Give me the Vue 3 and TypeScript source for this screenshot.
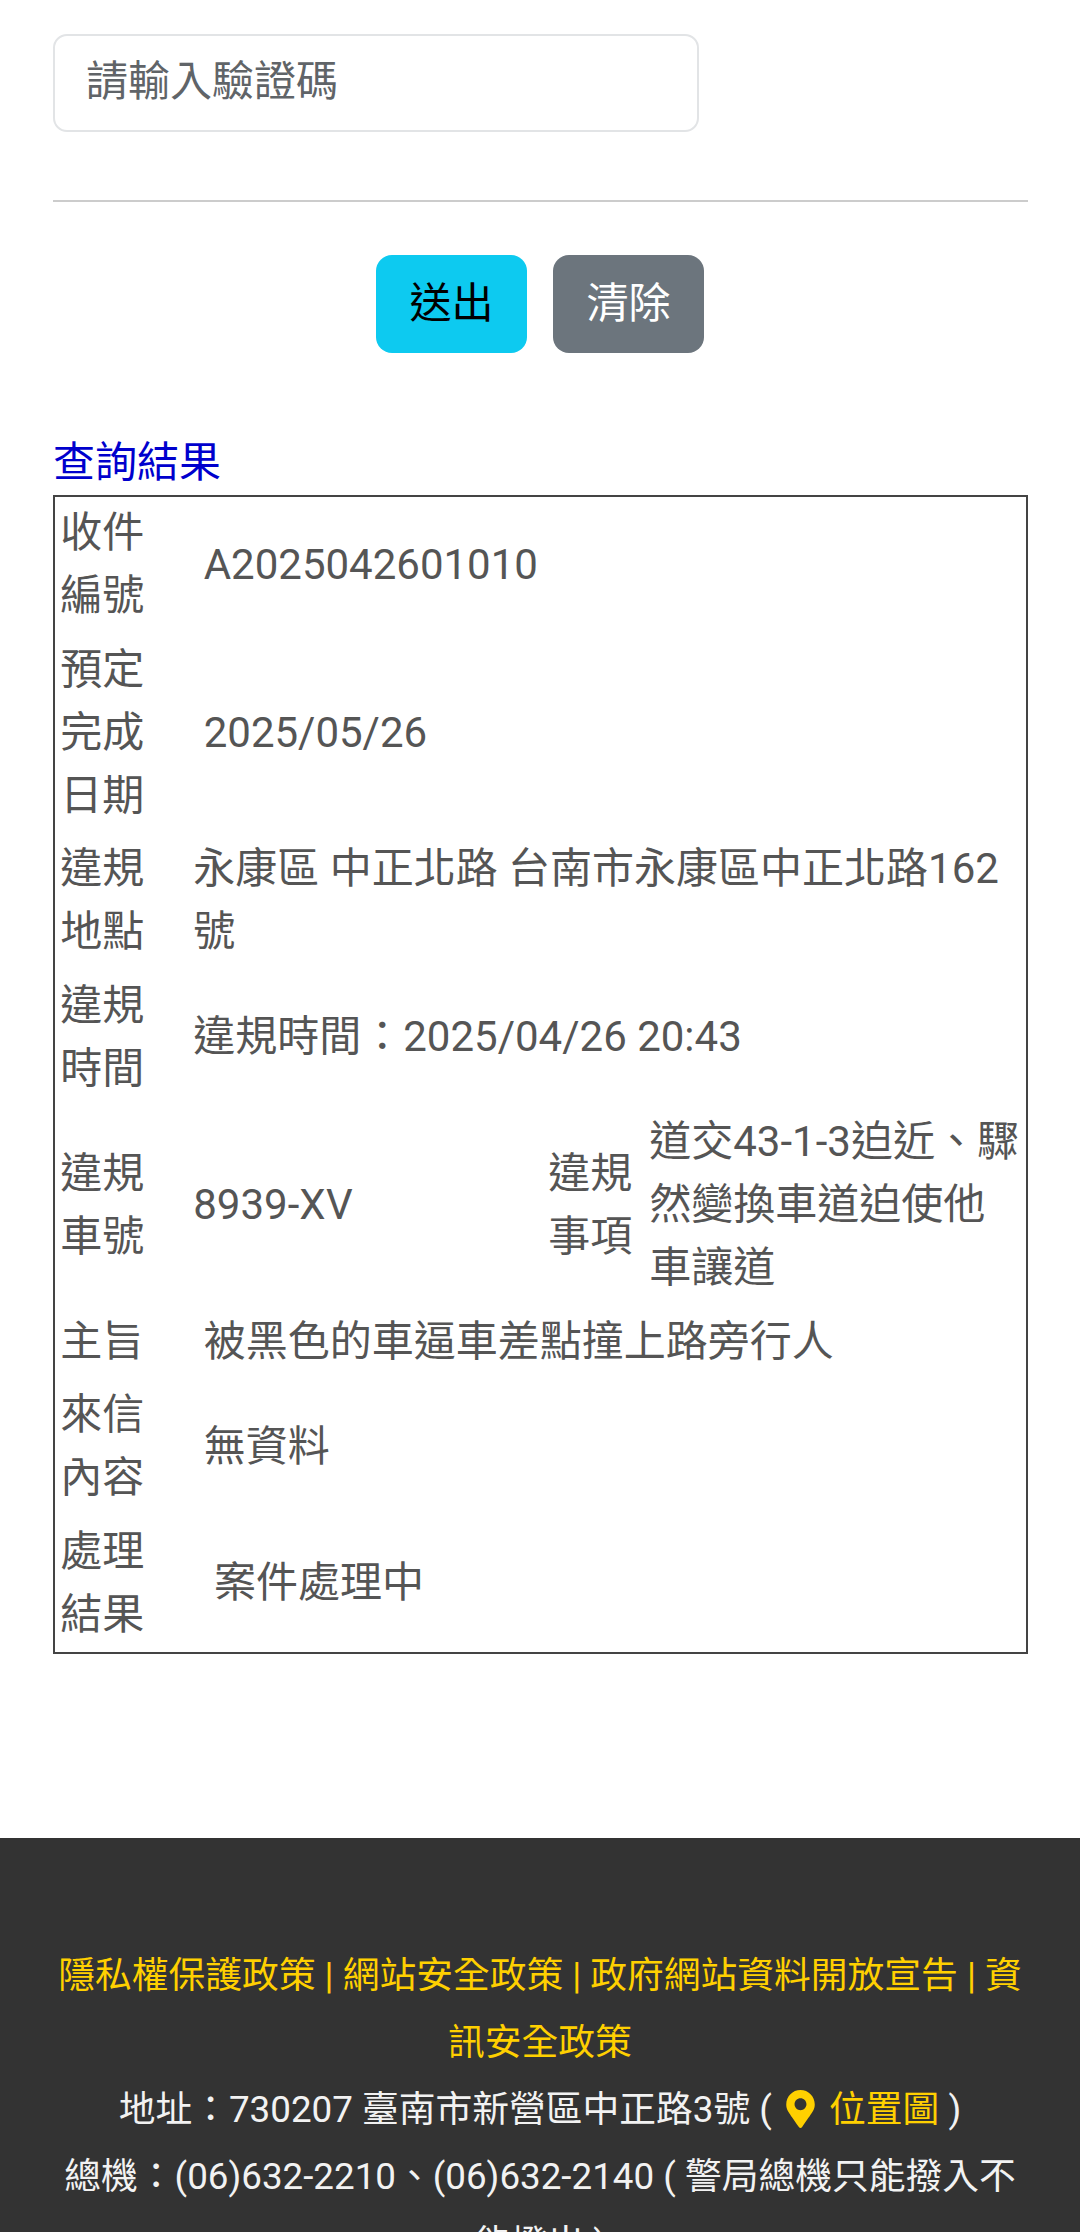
<script setup lang="ts">
interface Row {
  label: string
  value: string
}
const before: Row[] = [
  { label: '收件編號', value: '\u00a0A2025042601010' },
  { label: '預定完成日期', value: '\u00a02025/05/26' },
  { label: '違規地點', value: '永康區 中正北路 台南市永康區中正北路162號' },
  { label: '違規時間', value: '違規時間：2025/04/26 20:43' },
]
const after: Row[] = [
  { label: '主旨', value: '\u00a0被黑色的車逼車差點撞上路旁行人' },
  { label: '來信內容', value: '\u00a0無資料' },
  { label: '處理結果', value: '\u00a0\u00a0案件處理中' },
]
const links = ['隱私權保護政策', '網站安全政策', '政府網站資料開放宣告', '資訊安全政策']
const pinPath =
  'M172.268 501.67C26.97 291.031 0 269.413 0 192 0 85.961 85.961 0 192 0s192 85.961 192 192c0 77.413-26.97 99.031-172.268 309.67-9.535 13.774-29.93 13.773-39.464 0zM192 272c44.183 0 80-35.817 80-80s-35.817-80-80-80-80 35.817-80 80 35.817 80 80 80z'
</script>

<template>
  <div class="page">
    <main class="content">
      <input class="captcha" type="text" placeholder="請輸入驗證碼" />
      <hr class="rule" />
      <div class="actions">
        <button class="btn btn-send" type="button">送出</button>
        <button class="btn btn-clear" type="button">清除</button>
      </div>
      <div class="result-title">查詢結果</div>
      <table class="result">
        <colgroup>
          <col class="c1" />
          <col class="c2" />
          <col class="c3" />
          <col class="c4" />
        </colgroup>
        <tbody>
          <tr v-for="r in before" :key="r.label">
            <td>{{ r.label }}</td>
            <td colspan="3">{{ r.value }}</td>
          </tr>
          <tr>
            <td>違規車號</td>
            <td>8939-XV</td>
            <td>違規事項</td>
            <td>道交43-1-3迫近、驟然變換車道迫使他車讓道</td>
          </tr>
          <tr v-for="r in after" :key="r.label">
            <td>{{ r.label }}</td>
            <td colspan="3">{{ r.value }}</td>
          </tr>
        </tbody>
      </table>
    </main>
    <footer class="footer">
      <p class="links">
        <template v-for="(l, i) in links" :key="l">
          <span v-if="i > 0"> | </span><a href="#" @click.prevent>{{ l }}</a>
        </template>
      </p>
      <p class="info">地址：730207 臺南市新營區中正路3號 ( <svg class="pin" viewBox="0 0 384 512" aria-hidden="true"><path fill="#ffd000" :d="pinPath" /></svg> <a href="#" @click.prevent>位置圖</a> )</p>
      <p class="info">總機：(06)632-2210、(06)632-2140 ( 警局總機只能撥入不能撥出 )</p>
    </footer>
  </div>
</template>

<style>
html,
body {
  margin: 0;
  background: #fff;
}
</style>

<style scoped>
.page {
  height: 2232px;
  overflow: hidden;
  font-family: Roboto, "Noto Sans CJK TC", sans-serif;
  font-size: 42px;
  line-height: 63px;
  color: #555;
}
.content {
  padding: 34px 52px 0 53px;
}
.captcha {
  display: block;
  box-sizing: border-box;
  width: 646px;
  height: 98px;
  padding: 0 31px 4px;
  border: 2.5px solid #e2e4e6;
  border-radius: 14px;
  background: #fff;
  color: #555;
  font: inherit;
  outline: none;
}
.captcha::placeholder {
  color: #606468;
  opacity: 1;
}
.rule {
  height: 2px;
  margin: 68px 0 0;
  border: 0;
  background: #ccc;
}
.actions {
  display: flex;
  justify-content: center;
  gap: 26px;
  margin: 53px 0 0 -1px;
}
.btn {
  box-sizing: border-box;
  width: 151px;
  height: 98px;
  padding: 0 0 1px;
  border: 0;
  border-radius: 16px;
  font: inherit;
}
.btn-send {
  background: #0dcaf0;
  color: #000;
}
.btn-clear {
  background: #6c757d;
  color: #fff;
}
.result-title {
  margin-top: 78px;
  margin-bottom: 1px;
  color: #0000cd;
}
.result {
  box-sizing: border-box;
  width: 975px;
  table-layout: fixed;
  border-collapse: separate;
  border-spacing: 0;
  border: 2px solid #444;
}
.c1 {
  width: 133px;
}
.c2 {
  width: 355px;
}
.c3 {
  width: 101px;
}
.result td {
  padding: 4.25px 5.25px 6.25px;
  vertical-align: middle;
}
.footer {
  margin-top: 184px;
  padding: 104px 52px 0;
  background: #333;
  color: #f2f2f2;
  font-size: 36.75px;
  line-height: 67px;
  text-align: center;
  height: 500px;
}
.footer p {
  margin: 0;
}
.footer a {
  color: #ffd000;
  text-decoration: none;
}
.links {
  color: #ffd000;
}
.pin {
  display: inline-block;
  width: 29px;
  height: 38px;
  margin: 0 5px;
  vertical-align: -6px;
}
</style>
